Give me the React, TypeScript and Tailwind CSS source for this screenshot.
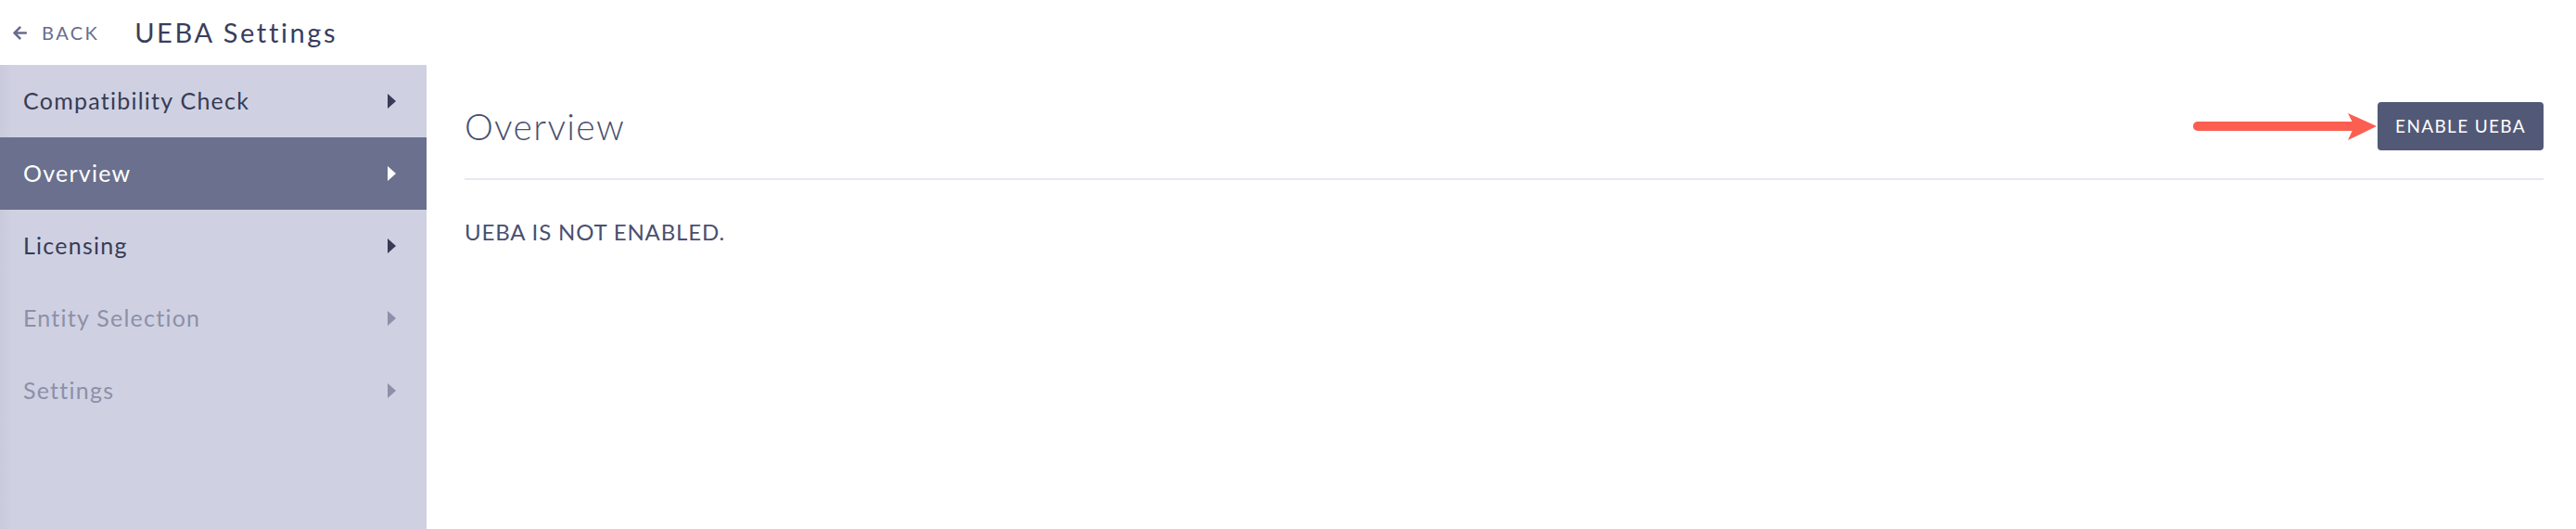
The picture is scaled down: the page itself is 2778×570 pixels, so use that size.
import { FaArrowLeft } from 'react-icons/fa';

const items = [
  { label: 'Compatibility Check', state: 'normal' },
  { label: 'Overview', state: 'active' },
  { label: 'Licensing', state: 'normal' },
  { label: 'Entity Selection', state: 'disabled' },
  { label: 'Settings', state: 'disabled' },
];

function Caret() {
  return (
    <svg width="11" height="18" viewBox="0 0 11 18">
      <path d="M1 1 L10 9 L1 17 Z" fill="currentColor" />
    </svg>
  );
}

function PointerArrow() {
  return (
    <svg width="200" height="40" viewBox="0 0 200 40" className="shrink-0">
      <line x1="6" y1="20" x2="176" y2="20" stroke="#fb5f52" strokeWidth="10" strokeLinecap="round" />
      <path d="M168 6 L199 20 L168 35 L175 20 Z" fill="#fb5f52" />
    </svg>
  );
}

export default function App() {
  return (
    <div className="flex h-[570px] w-full flex-col bg-white font-['Lato',sans-serif]">
      {/* Top bar */}
      <header className="flex h-[70px] shrink-0 items-center pl-[13px]">
        <button className="flex items-center gap-[15px] text-[#676c8c]">
          <FaArrowLeft className="h-[17px] w-[17px]" />
          <span className="text-[20px] tracking-[0.12em]">BACK</span>
        </button>
        <h1 className="ml-[38px] text-[29px] tracking-[0.09em] text-[#3a3d5c]">UEBA Settings</h1>
      </header>

      <div className="flex flex-1">
        {/* Sidebar */}
        <nav className="w-[460px] shrink-0 bg-[#cfd1e2] bg-gradient-to-r from-[#c9cbdc] from-0% to-[#cfd1e2] to-[3%]">
          {items.map((it) => (
            <div
              key={it.label}
              className={
                it.state === 'active'
                  ? 'flex h-[78px] items-center justify-between bg-[#6a708d] pl-[25px] pr-[32px] text-white'
                  : it.state === 'disabled'
                    ? 'flex h-[78px] items-center justify-between pl-[25px] pr-[32px] text-[#8d90a8]'
                    : 'flex h-[78px] items-center justify-between pl-[25px] pr-[32px] text-[#383b55]'
              }
            >
              <span className="text-[25px] tracking-[0.05em]">{it.label}</span>
              <Caret />
            </div>
          ))}
        </nav>

        {/* Content */}
        <main className="flex-1 pl-[41px] pr-[35px] pt-[40px]">
          <div className="flex h-[52px] items-center">
            <h2 className="text-[39px] font-light tracking-[0.035em] text-[#4a5070]">Overview</h2>
            <div className="ml-auto flex items-center">
              <PointerArrow />
              <button className="h-[52px] w-[179px] rounded-[4px] bg-[#525977] text-[19px] tracking-[0.07em] text-white">
                ENABLE UEBA
              </button>
            </div>
          </div>
          <div className="mt-[30px] h-[2px] bg-[#e9e9f0]" />
          <p className="mt-[38px] text-[24px] tracking-[0.035em] text-[#4a5070]">UEBA IS NOT ENABLED.</p>
        </main>
      </div>
    </div>
  );
}
